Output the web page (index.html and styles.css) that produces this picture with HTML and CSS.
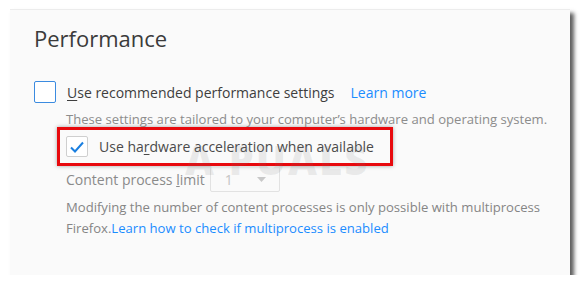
FILE: index.html
```html
<!DOCTYPE html>
<html>
<head>
<meta charset="utf-8">
<link rel="stylesheet" href="styles.css">
</head>
<body>
<div class="panel">
  <h1 class="title">Performance</h1>
  <div class="row row-main">
    <span class="cb"></span>
    <span class="label"><u>U</u>se recommended performance settings</span>
    <a class="link learn">Learn more</a>
  </div>
  <div class="desc">These settings are tailored to your computer’s hardware and operating system.</div>
  <div class="hl">
    <span class="cb cb-checked">
      <svg width="16" height="14" viewBox="0 0 16 14"><path d="M2 7.5 L6 11.5 L14 2.5" fill="none" stroke="#1a7fe0" stroke-width="2"/></svg>
    </span>
    <span class="label">Use ha<u>r</u>dware acceleration when available</span>
  </div>
  <div class="row row-limit">
    <span class="dim">Content process <u>l</u>imit</span>
    <span class="select"><span>1</span><svg width="9" height="5" viewBox="0 0 9 5"><path d="M0 0 H9 L4.5 5 Z" fill="#c8c8c8"/></svg></span>
  </div>
  <div class="note">Modifying the number of content processes is only possible with multiprocess<br>Firefox.<a class="link">Learn how to check if multiprocess is enabled</a></div>
  <div class="wm">A&nbsp;PUALS</div>
</div>
</body>
</html>
```
FILE: styles.css
```css
html, body { margin: 0; padding: 0; background: #fff; }
body { font-family: "Open Sans", "Noto Sans", sans-serif; }
.panel {
  position: relative;
  margin: 9px 0 0 10px;
  width: 560px;
  height: 266px;
  padding: 0 0 0 24px;
  background: #fafafa;
  border-top: 1px solid #ececec;
  box-shadow: 4px 4px 4px rgba(40,40,40,0.75);
  box-sizing: border-box;
}
.title {
  margin: 0;
  padding-top: 13px;
  font-size: 22px;
  font-weight: 400;
  color: #3b3b3b;
  line-height: 30px;
}
.row { display: flex; align-items: center; }
.row-main { margin-top: 27px; height: 24px; }
.cb {
  flex: none;
  width: 22px; height: 22px;
  border: 1px solid #3b8be0;
  border-radius: 2px;
  box-sizing: border-box;
  background: #fff;
  display: inline-flex; align-items: center; justify-content: center;
}
.label { font-size: 14px; color: #3e3e3e; margin-left: 11px; white-space: nowrap; }
.label u { text-decoration-thickness: 1px; text-underline-offset: 2px; }
.link { color: #1a8cff; text-decoration: none; }
.learn { font-size: 14px; margin-left: 16px; }
.desc { margin: 5px 0 0 32px; font-size: 13.1px; color: #8c8c8c; line-height: 20px; white-space: nowrap; }
.hl {
  display: flex; align-items: center;
  margin: -2px 0 0 23px;
  width: 336px; height: 39px;
  border: 3px solid #e8090d;
  box-sizing: border-box;
  padding-left: 6px;
  box-shadow: 0 0 4px rgba(0,0,0,0.35);
}
.cb-checked { border-color: #cfcfcf; width: 22px; height: 21px; }
.hl .label { color: #4a4a4a; }
.row-limit { margin: 0 0 0 32px; height: 26px; }
.dim { font-size: 14px; color: #8a8a8a; }
.dim u { text-decoration-thickness: 1px; }
.select {
  margin-left: 5px;
  width: 70px; height: 26px;
  border: 1px solid #e2e2e2;
  border-radius: 2px;
  box-sizing: border-box;
  display: flex; align-items: center; justify-content: space-between;
  padding: 0 13px 0 14px;
  color: #c4c4c4; font-size: 14px;
}
.note { margin: 5px 0 0 32px; font-size: 13.1px; color: #858585; line-height: 21px; }
.wm {
  position: absolute; left: 175px; top: 122px;
  font-size: 40px; font-weight: 800; color: rgba(120,120,120,0.12);
  letter-spacing: 2px;
}
```
